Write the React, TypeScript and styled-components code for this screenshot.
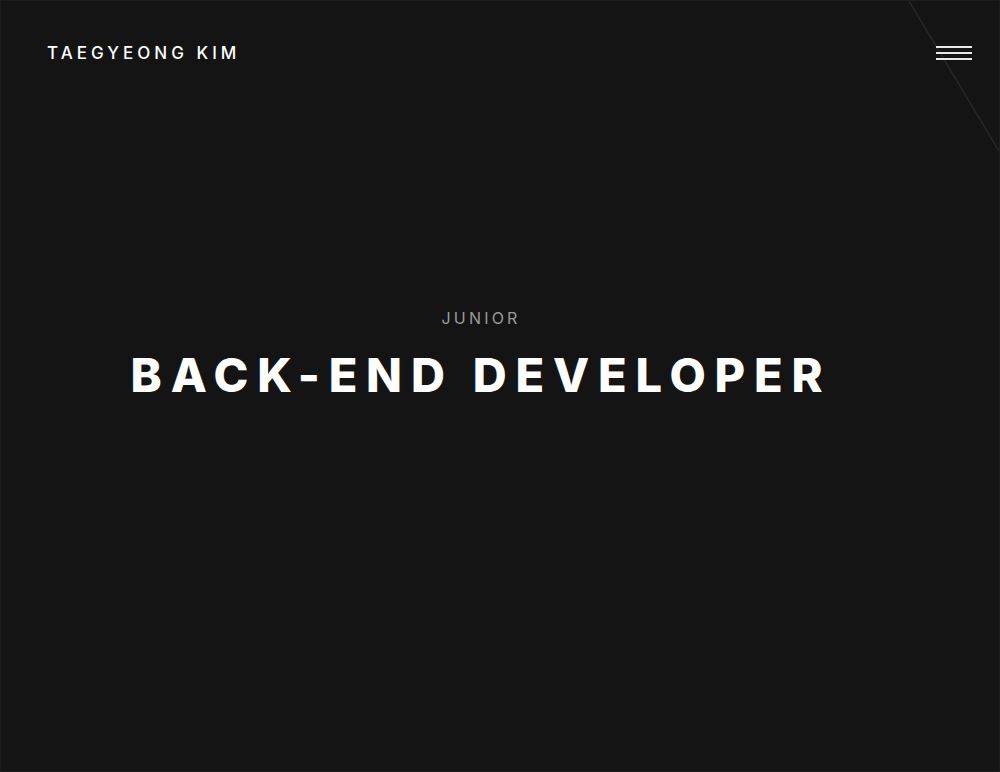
import React from "react";
import styled, { createGlobalStyle } from "styled-components";

const Global = createGlobalStyle`
  html, body { margin: 0; padding: 0; background: #141414; }
  * { box-sizing: border-box; }
`;

const Page = styled.div`
  position: relative;
  width: 1000px;
  height: 772px;
  background: #141414;
  border: 1px solid #1e1e1e;
  overflow: hidden;
  display: flex;
  flex-direction: column;
  font-family: Inter, "Noto Sans", sans-serif;
`;

const Diagonal = styled.svg`
  position: absolute;
  top: 0;
  right: 0;
  pointer-events: none;
`;

const Header = styled.header`
  display: flex;
  align-items: center;
  justify-content: space-between;
  height: 103px;
  padding: 0 27px 0 46px;
  position: relative;
`;

const Logo = styled.div`
  color: #ffffff;
  font-size: 17px;
  font-weight: 500;
  letter-spacing: 4px;
`;

const Burger = styled.button`
  display: flex;
  flex-direction: column;
  gap: 4px;
  width: 36px;
  padding: 0;
  background: none;
  border: none;
  cursor: pointer;
`;

const BurgerLine = styled.span`
  display: block;
  height: 2px;
  width: 36px;
  background: #e8e8e8;
`;

const Hero = styled.main`
  flex: 1;
  display: flex;
  flex-direction: column;
  align-items: center;
  padding: 204px 38px 0 0;
`;

const Kicker = styled.div`
  color: #9a9a9a;
  font-size: 16px;
  font-weight: 400;
  letter-spacing: 3.2px;
`;

const Title = styled.h1`
  margin: 19px 0 0;
  color: #ffffff;
  font-size: 47px;
  font-weight: 800;
  letter-spacing: 8.8px;
  line-height: 1.2;
`;

export default function App() {
  return (
    <Page>
      <Global />
      <Diagonal width="100" height="160" viewBox="0 0 100 160">
        <line x1="10" y1="0" x2="100" y2="150" stroke="#262626" strokeWidth="1.5" />
      </Diagonal>
      <Header>
        <Logo>TAEGYEONG KIM</Logo>
        <Burger aria-label="menu">
          <BurgerLine />
          <BurgerLine />
          <BurgerLine />
        </Burger>
      </Header>
      <Hero>
        <Kicker>JUNIOR</Kicker>
        <Title>BACK-END DEVELOPER</Title>
      </Hero>
    </Page>
  );
}
